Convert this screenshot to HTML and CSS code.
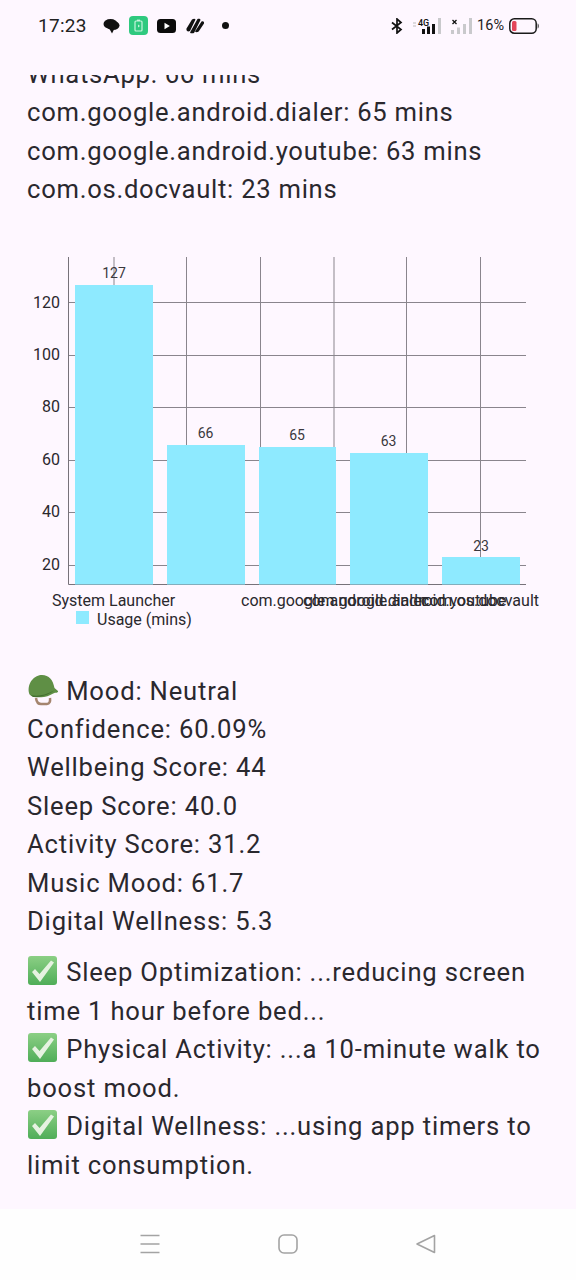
FILE: index.html

```html
<!DOCTYPE html>
<html lang="en">
<head>
   <meta charset="utf-8"/>
   <meta name="viewport" content="width=device-width, initial-scale=1" />
   <link rel="stylesheet" href="styles.css">
</head>
<body>
<div class="screen">

<!-- status bar -->
<header class="status">
   <div class="status-left">
      <span class="clock">17:23</span>
      <svg class="ic-chat" viewBox="0 0 17 16"><ellipse cx="7.5" cy="6" rx="7" ry="5" fill="#111"/><ellipse cx="10" cy="7.5" rx="6.5" ry="4.5" fill="#111"/><path d="M6 10l3 5.5 2-4z" fill="#111"/></svg>
      <svg class="ic-batt" viewBox="0 0 19 19"><rect width="19" height="19" rx="4" fill="#2fc97f"/><rect x="6" y="5" width="7" height="10" rx="1" fill="none" stroke="#c9f3dd" stroke-width="1.2"/><rect x="8" y="3.6" width="3" height="1.4" fill="#c9f3dd"/><path d="M9 8.500l2 1.500-2 1.500z" fill="#c9f3dd"/></svg>
      <svg class="ic-yt" viewBox="0 0 19 14"><rect width="19" height="14" rx="3.5" fill="#0b0b0b"/><path d="M7.5 3.800l5.400 3.200-5.400 3.200z" fill="#fff"/></svg>
      <svg class="ic-app" viewBox="0 0 18 16"><path d="M6 1.500c1.500-1 3-1 3.500 0L4 13c-2 1-4 .5-3.500-2.500zM11.500 1c1.500-.5 3 0 3 1L8 15c-1.500.5-3.500.5-4-.5zM15.500 3.500c2-.5 3 .5 2.500 2L13 13c-1 1.500-3 1.500-4 .5z" fill="#111"/></svg>
      <span class="status-dot"></span>
   </div>
   <div class="status-right">
      <svg class="ic-bt" viewBox="0 0 12 16"><path d="M1 4.500l9 7-4 3.500V1l4 3.500-9 7" fill="none" stroke="#111" stroke-width="1.7"/></svg>
      <svg class="ic-sig" viewBox="0 0 30 16">
         <path d="M1 5h3M1 8h3" stroke="#bbb" stroke-width="1.200"/>
         <rect x="10" y="11" width="3" height="5" fill="#111"/><rect x="15" y="8.500" width="3" height="7.500" fill="#111"/><rect x="20" y="6" width="3" height="10" fill="#111"/><rect x="26" y="0" width="3" height="16" fill="#c9c9cc"/>
         <text class="sig-4g" x="6" y="8">4G</text>
      </svg>
      <svg class="ic-sig2" viewBox="0 0 21 16">
         <path d="M1.500 2l4 4M5.500 2l-4 4" stroke="#111" stroke-width="1.300"/>
         <rect x="0" y="12" width="3" height="4" fill="#c9c9cc"/><rect x="6" y="9.500" width="3" height="6.500" fill="#c9c9cc"/><rect x="12" y="6" width="3" height="10" fill="#c9c9cc"/><rect x="18" y="0" width="3" height="16" fill="#c9c9cc"/>
      </svg>
      <span class="batt-pct">16%</span>
      <svg class="ic-level" viewBox="0 0 30 16"><rect x=".8" y=".8" width="26.400" height="14.400" rx="4.500" fill="none" stroke="#1a1a1a" stroke-width="1.500"/><rect x="3" y="3" width="4.500" height="10" rx="1.500" fill="#e4465a"/><path d="M28.700 5.500c1.300.4 1.300 4.600 0 5z" fill="#1a1a1a"/></svg>
   </div>
</header>

<main class="content">
   <p class="lines first">WhatsApp: 66 mins<br>com.google.android.dialer: 65 mins<br>com.google.android.youtube: 63 mins<br>com.os.docvault: 23 mins</p>

   <!-- bar chart, every piece sits at its own place on the canvas -->
   <svg class="chart" width="576" height="432" viewBox="0 240 576 432">
      <g class="grid">
         <path d="M114 257V285M186.500 257V445M260.500 257V447M334 257V447M406.500 257V453M480.500 257V557"/>
         <path d="M68.500 302.500H526M68.500 355.500H526M68.500 407.500H526M68.500 460.500H526M68.500 512.500H526M68.500 565.500H526"/>
      </g>
      <path class="axis" d="M68.500 257V584.500H526"/>
      <g class="bars">
         <rect x="75" y="285" width="78" height="299.500"/>
         <rect x="167" y="445" width="78" height="139.500"/>
         <rect x="259" y="447" width="77" height="137.500"/>
         <rect x="350" y="453" width="78" height="131.500"/>
         <rect x="442" y="557" width="78" height="27.500"/>
      </g>
      <g class="ticks">
         <text x="60" y="308">120</text>
         <text x="60" y="360">100</text>
         <text x="60" y="412">80</text>
         <text x="60" y="465">60</text>
         <text x="60" y="517">40</text>
         <text x="60" y="570">20</text>
      </g>
      <g class="values">
         <text x="114" y="278">127</text>
         <text x="205.500" y="438">66</text>
         <text x="297" y="440">65</text>
         <text x="388.500" y="446">63</text>
         <text x="481" y="551">23</text>
      </g>
      <g class="xlabels">
         <text x="52" y="605.500">System Launcher</text>
         <text x="241" y="605.500">com.google.android.dialer</text>
         <text x="303" y="605.500">com.google.android.youtube</text>
         <text x="539" y="605.500" class="end">com.os.docvault</text>
      </g>
      <rect class="legend-box" x="76" y="611" width="13" height="13"/>
      <text class="legend" x="97" y="624.500">Usage (mins)</text>
   </svg>

   <p class="lines wide">
      <svg class="emoji" viewBox="0 0 32 32"><path d="M9 24c.5 4 2 6 5 6h6c2.500 0 3.500-2.500 3-6" fill="none" stroke="#a5856f" stroke-width="2.500"/><path d="M2 19C0 8 8 1 15 1c7 0 11 5 12.500 13l3.500 3c.5 1-1 2-3 1.800-3 1-6 3.700-11 4.200-7 .8-14 .5-15-4z" fill="#5f8f45"/><path d="M4 21c6 1.500 14 .5 23-4.500-7 5.500-15 7-21 6.500z" fill="#44702f"/></svg>
      Mood: Neutral<br>Confidence: 60.09%<br>Wellbeing Score: 44<br>Sleep Score: 40.0<br>Activity Score: 31.2<br>Music Mood: 61.7<br>Digital Wellness: 5.3</p>

   <p class="lines wide tips">
      <svg class="emoji" viewBox="0 0 32 32"><use href="#tick"/></svg>
      Sleep Optimization: ...reducing screen time 1 hour before bed...<br>
      <svg class="emoji" viewBox="0 0 32 32"><use href="#tick"/></svg>
      Physical Activity: ...a 10-minute walk to boost mood.<br>
      <svg class="emoji" viewBox="0 0 32 32"><use href="#tick"/></svg>
      Digital Wellness: ...using app timers to limit consumption.</p>
</main>

<!-- navigation bar -->
<nav class="navbar">
   <svg class="nav-ic" viewBox="0 0 22 20"><path d="M1.500 1.500h19M1.500 10h19M1.500 18.500h19"/></svg>
   <svg class="nav-ic" viewBox="0 0 22 20"><rect x="2" y="1" width="18" height="18" rx="5"/></svg>
   <svg class="nav-ic" viewBox="0 0 22 20"><path d="M19.500 1.500L2 10l17.500 8.500z"/></svg>
</nav>

<svg class="defs" width="0" height="0"><defs>
   <symbol id="tick" viewBox="0 0 32 32">
      <linearGradient id="tick-bg" x1="0" y1="0" x2="0" y2="1"><stop offset="0" stop-color="#8ccf85"/><stop offset="1" stop-color="#4fad58"/></linearGradient>
      <rect x="1" y="1" width="29" height="29" rx="3" fill="url(#tick-bg)"/><path d="M5 17l3-3 4.500 5L24 5.500l3 2L13 27z" fill="#e6f2e1"/>
   </symbol>
</defs></svg>

</div>
</body>
</html>
```

FILE: styles.css

```css
/* page */
html, body {
   margin: 0;
   padding: 0;
}
body {
   background: #fef7ff;
   color: #2a282e;
   font-family: Roboto, sans-serif;
}
.screen {
   display: flex;
   flex-direction: column;
   width: 576px;
   height: 1280px;
   overflow: hidden;
}

/* status bar */
.status {
   flex: 0 0 75px;
   display: flex;
   justify-content: space-between;
   align-items: flex-start;
   padding: 16px 37px 0 38px;
   box-sizing: border-box;
}
.status-left, .status-right {
   display: flex;
   align-items: center;
   height: 19px;
}
.clock {
   font-size: 19px;
   letter-spacing: .3px;
   color: #222;
   margin-right: 16px;
}
.ic-chat { width: 17px; height: 16px; margin-right: 9px; }
.ic-batt { width: 19px; height: 19px; margin-right: 9px; }
.ic-yt { width: 19px; height: 14px; margin-right: 10px; }
.ic-app { width: 18px; height: 16px; margin-right: 18px; }
.status-dot {
   width: 7px;
   height: 7px;
   border-radius: 50%;
   background: #111;
}
.ic-bt { width: 12px; height: 16px; margin-right: 9px; }
.ic-sig { width: 30px; height: 16px; margin-right: 9px; }
.ic-sig2 { width: 21px; height: 16px; margin-right: 5px; }
.sig-4g { font-size: 9px; font-weight: 500; fill: #111; }
.batt-pct { font-size: 14.500px; color: #222; margin-right: 5px; }
.ic-level { width: 30px; height: 16px; }

/* scrolled text */
.content {
   flex: 1;
   min-height: 0;
   overflow: hidden;
}
.lines {
   margin: 0 27px;
   font-size: 25.600px;
   line-height: 38.400px;
   letter-spacing: .74px;
}
.wide { letter-spacing: .82px; }
.first { margin-top: -20px; }
.tips { margin-top: 13px; }
.emoji {
   width: 32px;
   height: 32px;
   vertical-align: -6px;
}

/* chart */
.chart {
   display: block;
   margin-top: 31px;
   font-family: Roboto, sans-serif;
}
.grid path {
   fill: none;
   stroke: #8a858d;
   stroke-width: 1;
}
.axis {
   fill: none;
   stroke: #77727a;
   stroke-width: 1;
}
.bars rect, .legend-box {
   fill: #8eeaff;
}
.ticks text {
   font-size: 16px;
   fill: #2a282d;
   text-anchor: end;
}
.values text {
   font-size: 14px;
   fill: #3a383d;
   text-anchor: middle;
}
.xlabels text {
   font-size: 16px;
   fill: #2a282d;
}
.xlabels .end { text-anchor: end; }
.legend {
   font-size: 16px;
   fill: #2a282d;
}

/* navigation bar */
.navbar {
   flex: 0 0 71px;
   background: #fefefe;
   display: flex;
   justify-content: center;
   align-items: flex-start;
   gap: 116px;
   padding: 25px 0 0 0;
   box-sizing: border-box;
}
.nav-ic {
   width: 22px;
   height: 20px;
   fill: none;
   stroke: #a3a3a3;
   stroke-width: 1.600;
   stroke-linejoin: round;
}
.defs { position: absolute; }
```
